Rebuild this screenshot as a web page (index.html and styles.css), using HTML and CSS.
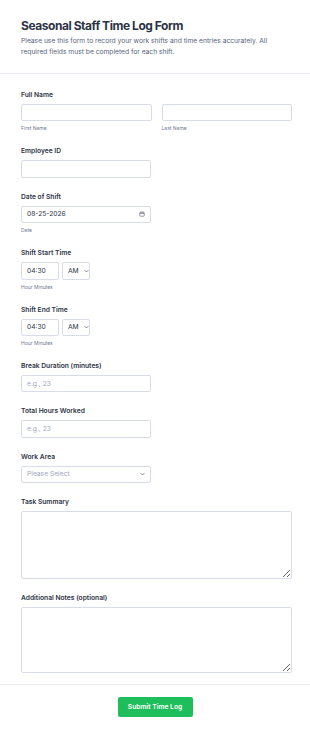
FILE: index.html
```html
<!DOCTYPE html>
<html>

<head>
  <title>Seasonal Staff Time Log Form</title>
  <link rel="stylesheet" href="styles.css">
</head>

<body>
  <form class="form">
    <div class="form-header">
      <h1 class="form-title">Seasonal Staff Time Log Form</h1>
      <p class="form-desc">Please use this form to record your work shifts and time entries accurately. All required fields must be completed for each shift.</p>
    </div>

    <div class="form-body">
      <div class="field">
        <label class="field-label">Full Name</label>
        <div class="name-row">
          <div class="name-col">
            <input class="text-input" type="text">
            <span class="sublabel">First Name</span>
          </div>
          <div class="name-col">
            <input class="text-input" type="text">
            <span class="sublabel">Last Name</span>
          </div>
        </div>
      </div>

      <div class="field">
        <label class="field-label">Employee ID</label>
        <input class="text-input half" type="text">
      </div>

      <div class="field">
        <label class="field-label">Date of Shift</label>
        <div class="text-input half date-input">
          <span>08-25-2026</span>
          <svg class="cal-icon" width="6" height="6" viewBox="0 0 12 12">
            <rect x="1.5" y="2.5" width="9" height="8" rx="1.5" fill="none" stroke="#5a6174" stroke-width="1.2"/>
            <line x1="1.5" y1="5" x2="10.5" y2="5" stroke="#5a6174" stroke-width="1.2"/>
            <line x1="4" y1="1" x2="4" y2="3.5" stroke="#5a6174" stroke-width="1.2"/>
            <line x1="8" y1="1" x2="8" y2="3.5" stroke="#5a6174" stroke-width="1.2"/>
          </svg>
        </div>
        <span class="sublabel">Date</span>
      </div>

      <div class="field">
        <label class="field-label">Shift Start Time</label>
        <div class="time-row">
          <div class="text-input time-input">04:30</div>
          <div class="text-input ampm">
            <span>AM</span>
            <svg class="chev" width="5" height="4" viewBox="0 0 8 5"><path d="M1 1l3 3 3-3" fill="none" stroke="#5a6174" stroke-width="1.2"/></svg>
          </div>
        </div>
        <span class="sublabel">Hour Minutes</span>
      </div>

      <div class="field">
        <label class="field-label">Shift End Time</label>
        <div class="time-row">
          <div class="text-input time-input">04:30</div>
          <div class="text-input ampm">
            <span>AM</span>
            <svg class="chev" width="5" height="4" viewBox="0 0 8 5"><path d="M1 1l3 3 3-3" fill="none" stroke="#5a6174" stroke-width="1.2"/></svg>
          </div>
        </div>
        <span class="sublabel">Hour Minutes</span>
      </div>

      <div class="field">
        <label class="field-label">Break Duration (minutes)</label>
        <input class="text-input half" type="text" placeholder="e.g., 23">
      </div>

      <div class="field">
        <label class="field-label">Total Hours Worked</label>
        <input class="text-input half" type="text" placeholder="e.g., 23">
      </div>

      <div class="field">
        <label class="field-label">Work Area</label>
        <div class="text-input half select-input">
          <span class="placeholder">Please Select</span>
          <svg class="chev" width="5" height="4" viewBox="0 0 8 5"><path d="M1 1l3 3 3-3" fill="none" stroke="#5a6174" stroke-width="1.2"/></svg>
        </div>
      </div>

      <div class="field">
        <label class="field-label">Task Summary</label>
        <textarea class="text-area tall"></textarea>
      </div>

      <div class="field">
        <label class="field-label">Additional Notes (optional)</label>
        <textarea class="text-area"></textarea>
      </div>
    </div>

    <div class="form-footer">
      <button class="submit-btn" type="button">Submit Time Log</button>
    </div>
  </form>
</body>

</html>
```

FILE: styles.css
```css
body {
  font-family: Inter, "Noto Sans", sans-serif;
  margin: 0;
  padding: 0;
  background-color: #ffffff;
  color: #2c3345;
}

.form-header {
  padding: 17px 21px 15px;
  border-bottom: 1px solid #eaebf2;
}

.form-title {
  margin: 0;
  font-size: 12px;
  font-weight: 700;
  line-height: 17px;
  letter-spacing: -0.45px;
  color: #2c3345;
}

.form-desc {
  margin: 2px 0 0;
  font-size: 6.7px;
  line-height: 11px;
  color: #57647e;
}

.form-body {
  padding: 16px 18px 11px 21px;
  border-bottom: 1px solid #eaebf2;
}

.field {
  display: flex;
  flex-direction: column;
  margin-bottom: 14px;
}

.field:last-child {
  margin-bottom: 0;
}

.field-label {
  font-size: 6.7px;
  font-weight: 600;
  line-height: 10px;
  margin-bottom: 4px;
  color: #2c3345;
}

.text-input {
  box-sizing: border-box;
  height: 17.4px;
  margin: 0;
  padding: 0 5px;
  border: 1px solid #d8dbe8;
  border-radius: 2px;
  background-color: #ffffff;
  font-family: inherit;
  font-size: 6.7px;
  color: #2c3345;
  outline: none;
}

.text-input::placeholder,
.placeholder {
  color: #a0a6bd;
}

.half {
  width: 130px;
}

.name-row {
  display: flex;
  gap: 10px;
}

.name-col {
  flex: 1;
  display: flex;
  flex-direction: column;
}

.sublabel {
  margin-top: 3px;
  font-size: 5px;
  line-height: 8px;
  color: #6f7690;
}

.date-input,
.select-input {
  display: flex;
  align-items: center;
  justify-content: space-between;
}

.time-row {
  display: flex;
  gap: 3px;
}

.time-input {
  width: 38px;
  display: flex;
  align-items: center;
}

.ampm {
  display: flex;
  align-items: center;
  gap: 5px;
  width: 28px;
  padding: 0 0 0 5px;
}

.text-area {
  box-sizing: border-box;
  width: 100%;
  height: 66px;
  margin: 0;
  border: 1px solid #d8dbe8;
  border-radius: 2px;
  font-family: inherit;
  outline: none;
}

.text-area.tall {
  height: 68px;
}

.form-footer {
  display: flex;
  justify-content: center;
  padding: 12px 0;
}

.submit-btn {
  width: 75px;
  height: 20px;
  border: none;
  border-radius: 2px;
  background-color: #1fbe5c;
  color: #ffffff;
  font-family: inherit;
  font-size: 6.7px;
  font-weight: 600;
  cursor: pointer;
}
```
